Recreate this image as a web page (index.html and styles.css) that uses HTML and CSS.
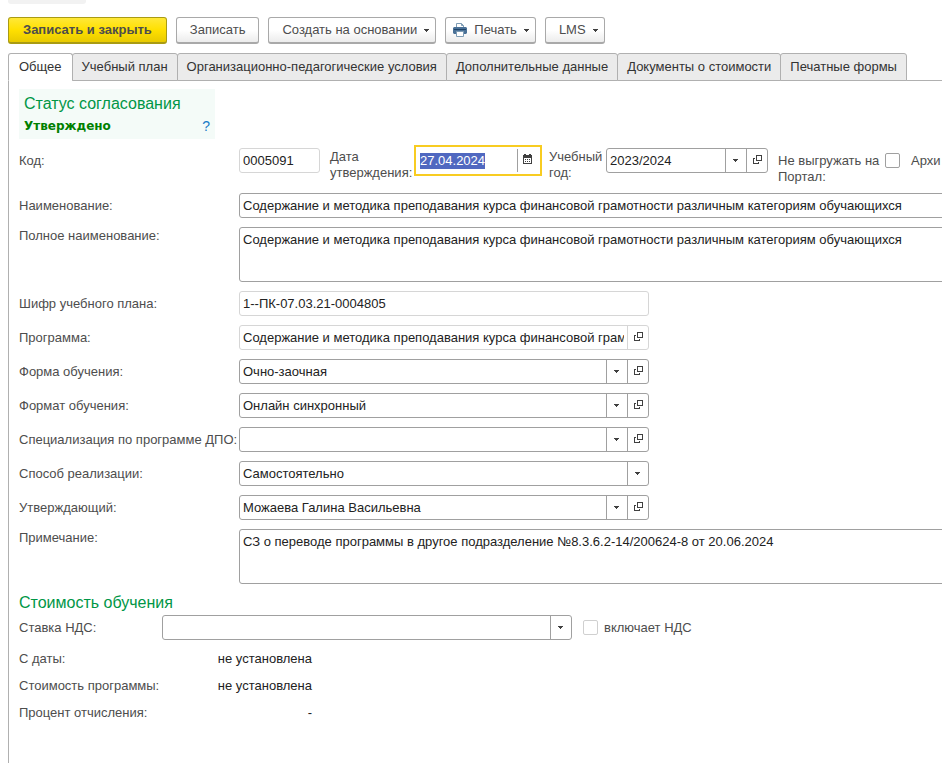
FILE: index.html
```html
<!DOCTYPE html>
<html lang="ru">
<head>
  <meta charset="UTF-8">
  <meta name="viewport" content="width=device-width, initial-scale=1">
  <title>Общее</title>
  <link rel="stylesheet" href="styles.css">
</head>
<body>
  <svg class="sprite" aria-hidden="true">
    <symbol id="arrow" viewBox="0 0 5 3"><path d="M0 0h5v1h-1v1h-1v1h-1v-1h-1v-1h-1z"/></symbol>
    <symbol id="open" viewBox="0 0 9 9"><path d="M3 0h6v6h-6zM4 1v4h4v-4zM0 3h2v1h-1v4h4v-1h1v2h-6z" fill-rule="evenodd"/></symbol>
  </svg>

  <div class="top-strip"></div>

  <div class="toolbar">
    <button class="btn primary">Записать и закрыть</button>
    <button class="btn">Записать</button>
    <button class="btn menu">Создать на основании <svg class="arrow"><use href="#arrow"/></svg></button>
    <button class="btn menu print">
      <svg class="printer" viewBox="0 0 14 14">
        <path d="M3.500 5v-4.500h5l2 2v2.500" fill="#fff" stroke="#7f9db5"/>
        <path d="M8.500 0.500v2h2" fill="none" stroke="#7f9db5"/>
        <path d="M1 4h12l1 1v5l-1 1h-12l-1-1v-5z" fill="#4a7197"/>
        <path d="M1 6h12v1h-12z" fill="#1f4469"/>
        <path d="M3.500 8.500h7v5h-7z" fill="#fff" stroke="#7f9db5"/>
      </svg>
      Печать <svg class="arrow"><use href="#arrow"/></svg>
    </button>
    <button class="btn menu">LMS <svg class="arrow"><use href="#arrow"/></svg></button>
  </div>

  <div class="tabs" role="tablist">
    <button class="tab active" role="tab" aria-selected="true">Общее</button>
    <button class="tab" role="tab">Учебный план</button>
    <button class="tab" role="tab">Организационно-педагогические условия</button>
    <button class="tab" role="tab">Дополнительные данные</button>
    <button class="tab" role="tab">Документы о стоимости</button>
    <button class="tab" role="tab">Печатные формы</button>
  </div>

  <div class="panel">
    <section class="status">
      <h2>Статус согласования</h2>
      <div class="status-line">
        <strong>Утверждено</strong>
        <a href="#">?</a>
      </div>
    </section>

    <form class="form">
      <div class="row first">
        <label for="code">Код:</label>
        <div class="group">
          <input id="code" class="box code" type="text" value="0005091" readonly>
          <label for="date" class="two-lines date-label">Дата утверждения:</label>
          <div class="box date">
            <input id="date" type="text" value="27.04.2024">
            <button type="button" aria-label="Календарь">
              <svg class="calendar" viewBox="0 0 9 10"><path d="M0 1h1v-1h2v1h3v-1h2v1h1v9h-9zM1 4v5h7v-5zM2 5h1v1h-1zM4 5h1v1h-1zM6 5h1v1h-1zM2 7h1v1h-1zM4 7h1v1h-1zM6 7h1v1h-1z" fill-rule="evenodd"/></svg>
            </button>
          </div>
          <label for="year" class="two-lines year-label">Учебный год:</label>
          <div class="box combo year">
            <select id="year"><option>2023/2024</option></select>
            <span class="drop"><svg class="arrow"><use href="#arrow"/></svg></span>
            <button type="button" aria-label="Открыть"><svg class="open"><use href="#open"/></svg></button>
          </div>
          <label for="portal" class="two-lines portal-label">Не выгружать на Портал:</label>
          <input id="portal" class="check" type="checkbox">
          <span class="archive">Архи</span>
        </div>
      </div>

      <div class="row">
        <label for="name">Наименование:</label>
        <input id="name" class="box" type="text" value="Содержание и методика преподавания курса финансовой грамотности различным категориям обучающихся">
      </div>
      <div class="row top">
        <label for="fullname">Полное наименование:</label>
        <textarea id="fullname" class="box">Содержание и методика преподавания курса финансовой грамотности различным категориям обучающихся</textarea>
      </div>
      <div class="row short">
        <label for="cipher">Шифр учебного плана:</label>
        <input id="cipher" class="box" type="text" value="1--ПК-07.03.21-0004805" readonly>
      </div>
      <div class="row short">
        <label for="program">Программа:</label>
        <div class="box combo plain readonly">
          <input id="program" type="text" value="Содержание и методика преподавания курса финансовой грам" readonly>
          <button type="button" aria-label="Открыть"><svg class="open"><use href="#open"/></svg></button>
        </div>
      </div>
      <div class="row short">
        <label for="form">Форма обучения:</label>
        <div class="box combo">
          <select id="form"><option>Очно-заочная</option></select>
          <span class="drop"><svg class="arrow"><use href="#arrow"/></svg></span>
          <button type="button" aria-label="Открыть"><svg class="open"><use href="#open"/></svg></button>
        </div>
      </div>
      <div class="row short">
        <label for="format">Формат обучения:</label>
        <div class="box combo">
          <select id="format"><option>Онлайн синхронный</option></select>
          <span class="drop"><svg class="arrow"><use href="#arrow"/></svg></span>
          <button type="button" aria-label="Открыть"><svg class="open"><use href="#open"/></svg></button>
        </div>
      </div>
      <div class="row short">
        <label for="spec">Специализация по программе ДПО:</label>
        <div class="box combo">
          <select id="spec"><option></option></select>
          <span class="drop"><svg class="arrow"><use href="#arrow"/></svg></span>
          <button type="button" aria-label="Открыть"><svg class="open"><use href="#open"/></svg></button>
        </div>
      </div>
      <div class="row short">
        <label for="method">Способ реализации:</label>
        <div class="box combo single">
          <select id="method"><option>Самостоятельно</option></select>
          <span class="drop"><svg class="arrow"><use href="#arrow"/></svg></span>
        </div>
      </div>
      <div class="row short">
        <label for="approver">Утверждающий:</label>
        <div class="box combo">
          <select id="approver"><option>Можаева Галина Васильевна</option></select>
          <span class="drop"><svg class="arrow"><use href="#arrow"/></svg></span>
          <button type="button" aria-label="Открыть"><svg class="open"><use href="#open"/></svg></button>
        </div>
      </div>
      <div class="row top">
        <label for="note">Примечание:</label>
        <textarea id="note" class="box">СЗ о переводе программы в другое подразделение №8.3.6.2-14/200624-8 от 20.06.2024</textarea>
      </div>
    </form>

    <section class="cost">
      <h2>Стоимость обучения</h2>
      <div class="vat">
        <label for="vat">Ставка НДС:</label>
        <div class="box combo single">
          <select id="vat"><option></option></select>
          <span class="drop"><svg class="arrow"><use href="#arrow"/></svg></span>
        </div>
        <input id="incl" class="check" type="checkbox" disabled>
        <label for="incl">включает НДС</label>
      </div>
      <dl class="totals">
        <dt>С даты:</dt><dd>не установлена</dd>
        <dt>Стоимость программы:</dt><dd>не установлена</dd>
        <dt>Процент отчисления:</dt><dd>-</dd>
      </dl>
    </section>
  </div>
</body>
</html>
```
FILE: styles.css
```css
* {
  box-sizing: border-box;
}

body {
  margin: 0;
  min-height: 100vh;
  display: flex;
  flex-direction: column;
  background: #fff;
  color: #4d4d4d;
  font: 13px/16px "Liberation Sans", Arial, sans-serif;
  overflow: hidden;
}

button, input, select, textarea {
  font: inherit;
  color: inherit;
}

h2 {
  margin: 0;
  font-size: 16px;
  line-height: 20px;
  font-weight: normal;
  color: #009646;
}

.sprite {
  display: none;
}

.top-strip {
  width: 78px;
  height: 4px;
  margin-left: 8px;
  border-radius: 0 0 3px 3px;
  background: #f2f2f2;
}

/* toolbar */
.toolbar {
  display: flex;
  gap: 9px;
  padding: 13px 8px 9px;
}

.btn {
  display: flex;
  align-items: center;
  height: 27px;
  padding: 0 13px;
  border: 1px solid #a9a9a9;
  border-bottom-width: 2px;
  border-radius: 3px;
  background: linear-gradient(#fff 50%, #ececec);
  white-space: nowrap;
  cursor: pointer;
}

.primary {
  padding: 0 14px;
  border-color: #a99b13;
  background: linear-gradient(#ffe838, #ffe000 50%, #e8ca00);
  font-weight: bold;
}

.menu {
  gap: 7px;
  padding-right: 6px;
}

.print {
  padding-left: 7px;
}

.arrow {
  width: 5px;
  height: 3px;
  fill: #404040;
}

.printer {
  width: 14px;
  height: 14px;
}

/* tabs */
.tabs {
  display: flex;
  margin-left: 8px;
  box-shadow: inset 0 -1px #b0b0b0;
}

.tab {
  height: 28px;
  margin-left: -1px;
  padding: 0 9px;
  border: 1px solid #b0b0b0;
  border-radius: 3px 3px 0 0;
  background: #ebebeb;
  color: #333;
  white-space: nowrap;
}

.tab.active {
  margin-left: 0;
  padding: 0 10px;
  border-bottom-color: #fff;
  background: #fff;
}

.panel {
  flex: 1;
  margin-left: 8px;
  padding: 8px 0 0 10px;
  border-left: 1px solid #b0b0b0;
}

.status {
  width: 196px;
  height: 50px;
  padding: 5px;
  background: #f4fbf8;
}

.status-line {
  display: flex;
  justify-content: space-between;
  padding-top: 4px;
}

.status strong {
  color: #008000;
  font-family: "DejaVu Sans", Verdana, sans-serif;
  font-size: 12px;
}

.status a {
  color: #1a7cc7;
  font-size: 14px;
  text-decoration: none;
}

/* form: runs past the right edge of the window */
.form {
  display: flex;
  flex-direction: column;
  gap: 9px;
  padding-top: 9px;
  width: calc(100% + 40px);
}

.row {
  display: grid;
  grid-template-columns: 220px 1fr;
  align-items: center;
}

.row.short {
  grid-template-columns: 220px 410px;
}

.row label {
  white-space: nowrap;
}

.row.top {
  align-items: start;
}

.row.top > label {
  padding-top: 1px;
}

.first {
  height: 36px;
  align-items: start;
}

.first > label {
  padding-top: 5px;
}

.group {
  display: flex;
  align-items: flex-start;
}

.group .two-lines {
  padding-top: 1px;
  white-space: normal;
}

.box {
  width: 100%;
  height: 25px;
  padding: 0 3px;
  border: 1px solid #a0a0a0;
  border-radius: 3px;
  background: #fff;
  color: #222;
  outline: none;
}

.box:read-only:is(input), .readonly {
  border-color: #d6d6d6;
}

textarea.box {
  display: block;
  height: 55px;
  padding: 4px 3px;
  resize: none;
}

.combo {
  display: grid;
  grid-template-columns: 1fr 21px 21px;
  padding: 0;
}

.plain, .single {
  grid-template-columns: 1fr 21px;
}

.combo > * {
  grid-row: 1;
}

.combo select, .combo input {
  min-width: 0;
  padding: 0 3px;
  border: 0;
  background: none;
  appearance: none;
  outline: none;
}

.combo select {
  grid-column: 1 / 3;
}

.combo button, .drop {
  display: grid;
  place-items: center;
  padding: 0 0 2px 1px;
  border: 0;
  border-left: 1px solid #a0a0a0;
  background: none;
}

.drop {
  grid-column: 2;
  padding: 0 1px 0 0;
  pointer-events: none;
}

.combo.readonly button {
  border-color: #d6d6d6;
}

.open {
  width: 9px;
  height: 9px;
  fill: #404040;
}

.code {
  width: 81px;
}

.date-label {
  width: 84px;
  margin-left: 10px;
}

.date {
  display: flex;
  align-items: center;
  width: 128px;
  height: 31px;
  margin-top: -3px;
  padding: 2px 2px 2px 4px;
  border: 2px solid #f8cc21;
  border-radius: 0;
}

.date input {
  width: 65px;
  height: 16px;
  padding: 0;
  border: 0;
  background: #5068c0;
  color: #fff;
  outline: none;
}

.date button {
  display: grid;
  place-items: center;
  width: 21px;
  height: 23px;
  margin-left: auto;
  padding: 0 1px 3px 0;
  border: 0;
  border-left: 1px solid #a0a0a0;
  background: none;
}

.calendar {
  width: 9px;
  height: 10px;
  fill: #404040;
}

.year-label {
  width: 57px;
  margin-left: 7px;
}

.year {
  width: 162px;
}

.group .portal-label {
  width: 107px;
  margin-left: 10px;
  padding-top: 5px;
}

.check {
  width: 15px;
  height: 15px;
  margin: 0;
  border: 1px solid #a0a0a0;
  border-radius: 2px;
  background: #fff;
  appearance: none;
}

.check:disabled {
  border-color: #d0d0d0;
}

.group .check {
  margin-top: 5px;
}

.archive {
  padding: 5px 0 0 11px;
}

/* cost */
.cost h2 {
  padding-top: 9px;
}

.vat {
  display: flex;
  align-items: center;
  padding-top: 2px;
}

.vat label:first-child {
  width: 143px;
}

.vat .box {
  width: 410px;
}

.vat .check {
  margin: 0 6px 0 11px;
}

.totals {
  display: grid;
  grid-template-columns: 160px 133px;
  row-gap: 11px;
  margin: 11px 0 0;
}

.totals dd {
  margin: 0;
  color: #222;
  text-align: right;
}
```
